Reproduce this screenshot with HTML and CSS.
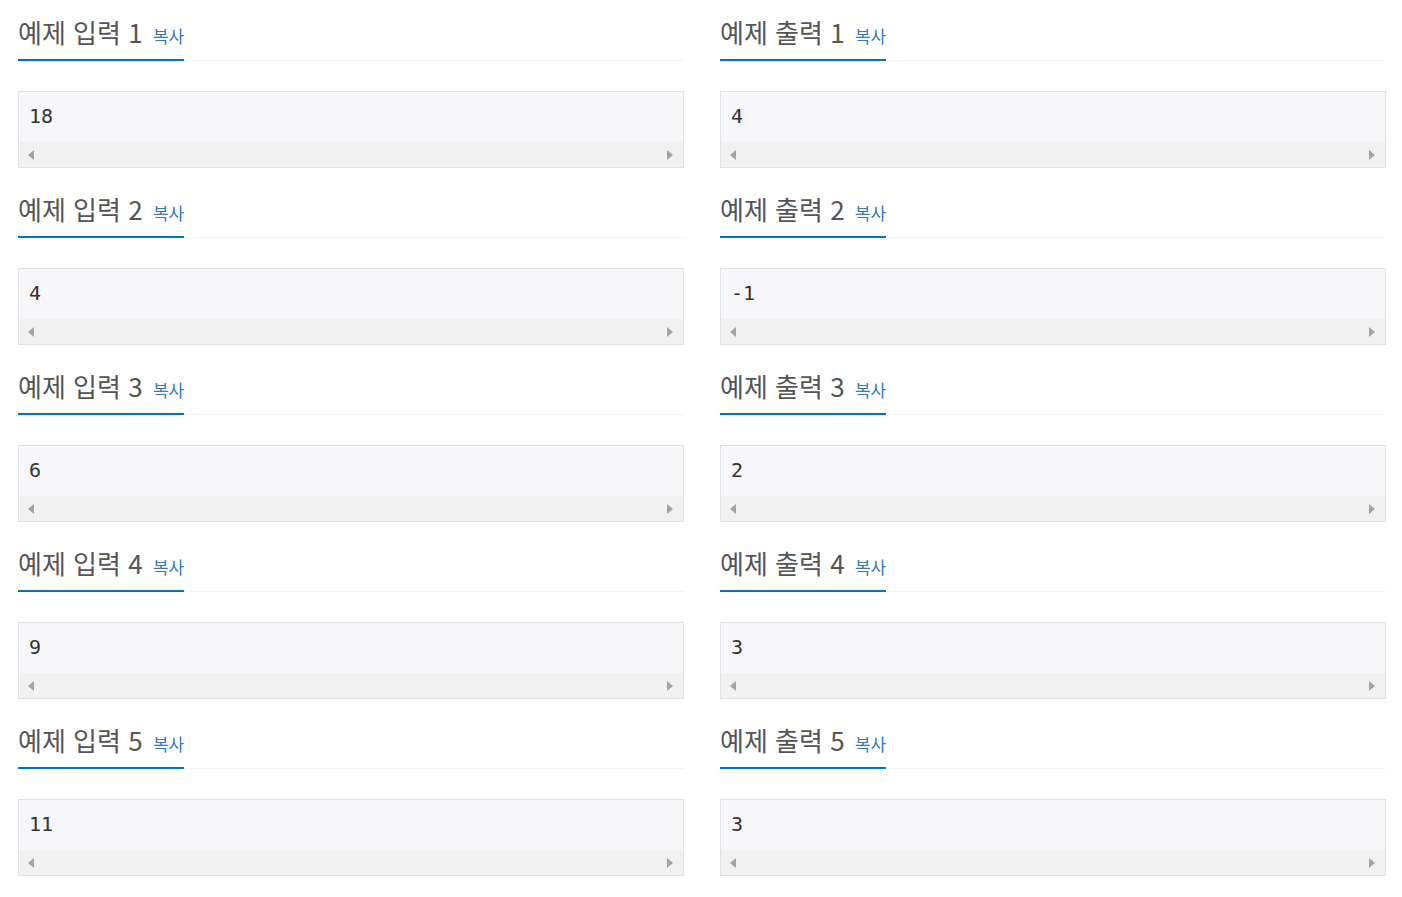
FILE: index.html
```html
<!DOCTYPE html>
<html lang="ko">
<head>
<meta charset="utf-8">
<title>예제</title>
<link rel="stylesheet" href="styles.css">
</head>
<body>
<div class="page">
  <div class="col">
    <section class="sample">
      <div class="headline"><h2>예제 입력 1 <span class="copy">복사</span></h2></div>
      <div class="data"><div class="text">18</div><div class="scroll"><span class="arr left"></span><span class="arr right"></span></div></div>
    </section>
    <section class="sample">
      <div class="headline"><h2>예제 입력 2 <span class="copy">복사</span></h2></div>
      <div class="data"><div class="text">4</div><div class="scroll"><span class="arr left"></span><span class="arr right"></span></div></div>
    </section>
    <section class="sample">
      <div class="headline"><h2>예제 입력 3 <span class="copy">복사</span></h2></div>
      <div class="data"><div class="text">6</div><div class="scroll"><span class="arr left"></span><span class="arr right"></span></div></div>
    </section>
    <section class="sample">
      <div class="headline"><h2>예제 입력 4 <span class="copy">복사</span></h2></div>
      <div class="data"><div class="text">9</div><div class="scroll"><span class="arr left"></span><span class="arr right"></span></div></div>
    </section>
    <section class="sample">
      <div class="headline"><h2>예제 입력 5 <span class="copy">복사</span></h2></div>
      <div class="data"><div class="text">11</div><div class="scroll"><span class="arr left"></span><span class="arr right"></span></div></div>
    </section>
  </div>
  <div class="col">
    <section class="sample">
      <div class="headline"><h2>예제 출력 1 <span class="copy">복사</span></h2></div>
      <div class="data"><div class="text">4</div><div class="scroll"><span class="arr left"></span><span class="arr right"></span></div></div>
    </section>
    <section class="sample">
      <div class="headline"><h2>예제 출력 2 <span class="copy">복사</span></h2></div>
      <div class="data"><div class="text">-1</div><div class="scroll"><span class="arr left"></span><span class="arr right"></span></div></div>
    </section>
    <section class="sample">
      <div class="headline"><h2>예제 출력 3 <span class="copy">복사</span></h2></div>
      <div class="data"><div class="text">2</div><div class="scroll"><span class="arr left"></span><span class="arr right"></span></div></div>
    </section>
    <section class="sample">
      <div class="headline"><h2>예제 출력 4 <span class="copy">복사</span></h2></div>
      <div class="data"><div class="text">3</div><div class="scroll"><span class="arr left"></span><span class="arr right"></span></div></div>
    </section>
    <section class="sample">
      <div class="headline"><h2>예제 출력 5 <span class="copy">복사</span></h2></div>
      <div class="data"><div class="text">3</div><div class="scroll"><span class="arr left"></span><span class="arr right"></span></div></div>
    </section>
  </div>
</div>
</body>
</html>
```
FILE: styles.css
```css
html, body {
  margin: 0;
  padding: 0;
  background: #fff;
}
.page {
  display: grid;
  grid-template-columns: 666px 666px;
  column-gap: 36px;
  padding: 14px 16px 0 18px;
  font-family: "Noto Sans CJK KR", "Noto Sans", sans-serif;
}
.col {
  display: flex;
  flex-direction: column;
  gap: 23px;
}
.headline {
  display: flex;
  align-items: flex-start;
  border-bottom: 1px dotted #e4e9f0;
  margin-bottom: 30px;
}
.headline h2 {
  display: block;
  margin: 0 0 -1px 0;
  padding-bottom: 9px;
  border-bottom: 2px solid #0076c0;
  font-size: 26px;
  font-weight: 400;
  line-height: 36px;
  color: #555;
  white-space: nowrap;
}
.copy {
  font-size: 17px;
  line-height: 17px;
  color: #337ab7;
  margin-left: 3px;
}
.data {
  border: 1px solid #e1e1e8;
  background: #f7f7f9;
}
.text {
  height: 48px;
  padding: 0 10px 2px;
  font-family: "DejaVu Sans Mono", "Liberation Mono", monospace;
  font-size: 20px;
  line-height: 48px;
  color: #333;
}
.scroll {
  height: 25px;
  background: #f1f1f1;
  display: flex;
  align-items: center;
  justify-content: space-between;
  padding: 0 10px 0 9px;
}
.arr {
  width: 0;
  height: 0;
  border-top: 5px solid transparent;
  border-bottom: 5px solid transparent;
}
.arr.left {
  border-right: 6px solid #a3a3a3;
}
.arr.right {
  border-left: 6px solid #a3a3a3;
}
```
